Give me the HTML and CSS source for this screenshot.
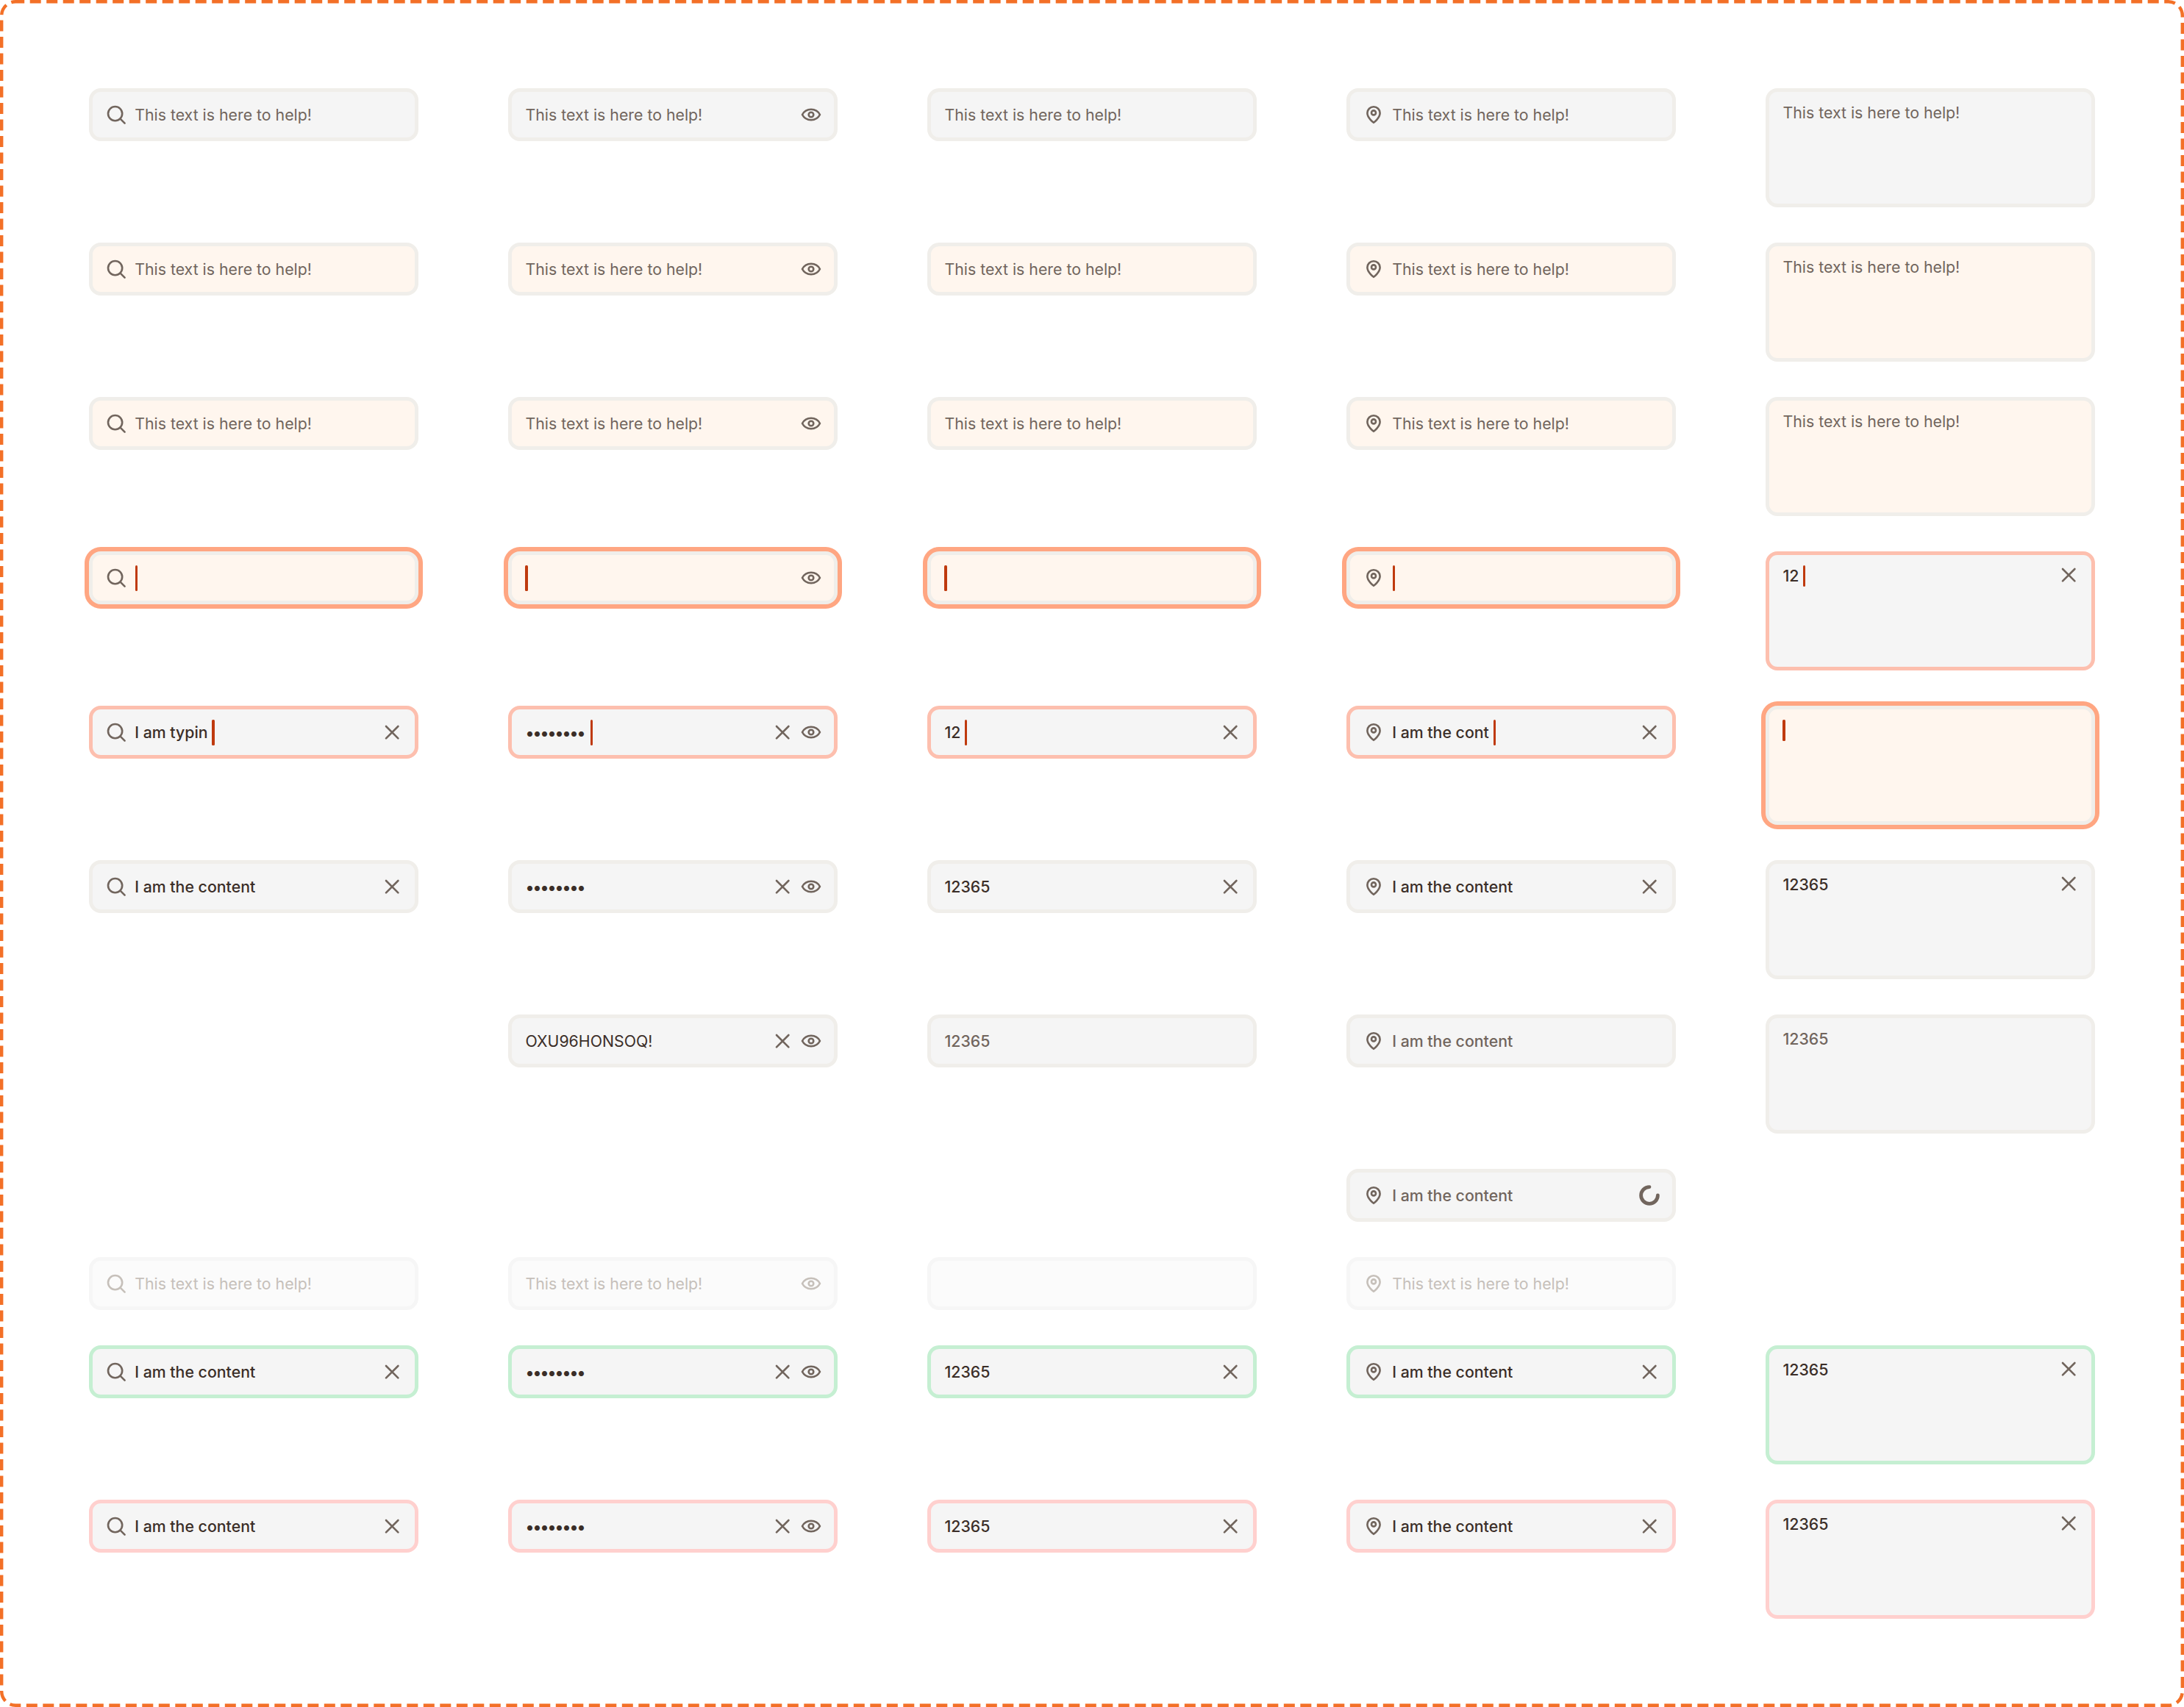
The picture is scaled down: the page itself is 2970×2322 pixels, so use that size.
FILE: index.html
```html
<!DOCTYPE html>
<html lang="en">
<head>
<meta charset="utf-8">
<title>Input states</title>
<link rel="stylesheet" href="styles.css">
</head>
<body>
<svg class="sprite" aria-hidden="true">
  <symbol id="i-search" viewBox="0 0 30 30"><circle cx="13.6" cy="13.6" r="9.6"/><path d="M20.6 20.6l6 6"/></symbol>
  <symbol id="i-eye" viewBox="0 0 30 30"><path d="M3 15c2.4-4.6 6.8-7.2 12-7.2S24.600 10.400 27 15c-2.400 4.600-6.800 7.200-12 7.200S5.400 19.600 3 15z"/><circle cx="15" cy="15" r="3.300"/></symbol>
  <symbol id="i-pin" viewBox="0 0 30 30"><path d="M15 25.800C15 25.800 23.600 19.500 23.600 12.800A8.600 8.600 0 1 0 6.400 12.800C6.400 19.500 15 25.800 15 25.800Z"/><circle cx="15" cy="12.400" r="3"/></symbol>
  <symbol id="i-x" viewBox="0 0 30 30"><path d="M7 7l16.400 16.400M23.400 7L7 23.400"/></symbol>
  <symbol id="i-spin" viewBox="0 0 30 30"><path class="spin-arc" d="M15 3.600A11.400 11.400 0 1 0 26.400 15"/></symbol>
</svg>
<main class="canvas">
  <svg class="frame" aria-hidden="true"><rect x="2.200" y="2.200" width="2965.600" height="2317.600" rx="19" ry="19"/></svg>
  <div class="board">
    <!-- row 1 default -->
    <div class="field"><svg class="ic"><use href="#i-search"/></svg><span class="txt">This text is here to help!</span></div>
    <div class="field"><span class="txt">This text is here to help!</span><svg class="ic end"><use href="#i-eye"/></svg></div>
    <div class="field"><span class="txt">This text is here to help!</span></div>
    <div class="field"><svg class="ic"><use href="#i-pin"/></svg><span class="txt">This text is here to help!</span></div>
    <div class="field area"><span class="txt">This text is here to help!</span></div>
    <!-- row 2 hover -->
    <div class="field warm"><svg class="ic"><use href="#i-search"/></svg><span class="txt">This text is here to help!</span></div>
    <div class="field warm"><span class="txt">This text is here to help!</span><svg class="ic end"><use href="#i-eye"/></svg></div>
    <div class="field warm"><span class="txt">This text is here to help!</span></div>
    <div class="field warm"><svg class="ic"><use href="#i-pin"/></svg><span class="txt">This text is here to help!</span></div>
    <div class="field area warm"><span class="txt">This text is here to help!</span></div>
    <!-- row 3 pressed -->
    <div class="field warm"><svg class="ic"><use href="#i-search"/></svg><span class="txt">This text is here to help!</span></div>
    <div class="field warm"><span class="txt">This text is here to help!</span><svg class="ic end"><use href="#i-eye"/></svg></div>
    <div class="field warm"><span class="txt">This text is here to help!</span></div>
    <div class="field warm"><svg class="ic"><use href="#i-pin"/></svg><span class="txt">This text is here to help!</span></div>
    <div class="field area warm"><span class="txt">This text is here to help!</span></div>
    <!-- row 4 focus -->
    <div class="field warm focus"><svg class="ic"><use href="#i-search"/></svg><span class="caret first"></span></div>
    <div class="field warm focus"><span class="caret first"></span><svg class="ic end"><use href="#i-eye"/></svg></div>
    <div class="field warm focus"><span class="caret first"></span></div>
    <div class="field warm focus"><svg class="ic"><use href="#i-pin"/></svg><span class="caret first"></span></div>
    <div class="field area typing"><span class="txt val">12</span><span class="caret short"></span><svg class="ic end"><use href="#i-x"/></svg></div>
    <!-- row 5 typing -->
    <div class="field typing"><svg class="ic"><use href="#i-search"/></svg><span class="txt val">I am typin</span><span class="caret"></span><svg class="ic end"><use href="#i-x"/></svg></div>
    <div class="field typing"><span class="txt val dots">••••••••</span><span class="caret"></span><svg class="ic end"><use href="#i-x"/></svg><svg class="ic"><use href="#i-eye"/></svg></div>
    <div class="field typing"><span class="txt val">12</span><span class="caret"></span><svg class="ic end"><use href="#i-x"/></svg></div>
    <div class="field typing"><svg class="ic"><use href="#i-pin"/></svg><span class="txt val">I am the cont</span><span class="caret"></span><svg class="ic end"><use href="#i-x"/></svg></div>
    <div class="field area warm focus"><span class="caret short first"></span></div>
    <!-- row 6 filled -->
    <div class="field"><svg class="ic"><use href="#i-search"/></svg><span class="txt val">I am the content</span><svg class="ic end"><use href="#i-x"/></svg></div>
    <div class="field"><span class="txt val dots">••••••••</span><svg class="ic end"><use href="#i-x"/></svg><svg class="ic"><use href="#i-eye"/></svg></div>
    <div class="field"><span class="txt val">12365</span><svg class="ic end"><use href="#i-x"/></svg></div>
    <div class="field"><svg class="ic"><use href="#i-pin"/></svg><span class="txt val">I am the content</span><svg class="ic end"><use href="#i-x"/></svg></div>
    <div class="field area"><span class="txt val">12365</span><svg class="ic end"><use href="#i-x"/></svg></div>
    <!-- row 7 revealed / read only -->
    <div class="slot"></div>
    <div class="field"><span class="txt plain">OXU96HONSOQ!</span><svg class="ic end"><use href="#i-x"/></svg><svg class="ic"><use href="#i-eye"/></svg></div>
    <div class="field"><span class="txt ro">12365</span></div>
    <div class="field"><svg class="ic"><use href="#i-pin"/></svg><span class="txt ro">I am the content</span></div>
    <div class="field area"><span class="txt ro">12365</span></div>
    <!-- row 8 loading -->
    <div class="slot"></div>
    <div class="slot"></div>
    <div class="slot"></div>
    <div class="field"><svg class="ic"><use href="#i-pin"/></svg><span class="txt ro">I am the content</span><svg class="ic end"><use href="#i-spin"/></svg></div>
    <div class="slot"></div>
    <!-- row 9 disabled -->
    <div class="field off"><svg class="ic"><use href="#i-search"/></svg><span class="txt">This text is here to help!</span></div>
    <div class="field off"><span class="txt">This text is here to help!</span><svg class="ic end"><use href="#i-eye"/></svg></div>
    <div class="field off"></div>
    <div class="field off"><svg class="ic"><use href="#i-pin"/></svg><span class="txt">This text is here to help!</span></div>
    <div class="slot"></div>
    <!-- row 10 success -->
    <div class="field good"><svg class="ic"><use href="#i-search"/></svg><span class="txt val">I am the content</span><svg class="ic end"><use href="#i-x"/></svg></div>
    <div class="field good"><span class="txt val dots">••••••••</span><svg class="ic end"><use href="#i-x"/></svg><svg class="ic"><use href="#i-eye"/></svg></div>
    <div class="field good"><span class="txt val">12365</span><svg class="ic end"><use href="#i-x"/></svg></div>
    <div class="field good"><svg class="ic"><use href="#i-pin"/></svg><span class="txt val">I am the content</span><svg class="ic end"><use href="#i-x"/></svg></div>
    <div class="field area good"><span class="txt val">12365</span><svg class="ic end"><use href="#i-x"/></svg></div>
    <!-- row 11 error -->
    <div class="field bad"><svg class="ic"><use href="#i-search"/></svg><span class="txt val">I am the content</span><svg class="ic end"><use href="#i-x"/></svg></div>
    <div class="field bad"><span class="txt val dots">••••••••</span><svg class="ic end"><use href="#i-x"/></svg><svg class="ic"><use href="#i-eye"/></svg></div>
    <div class="field bad"><span class="txt val">12365</span><svg class="ic end"><use href="#i-x"/></svg></div>
    <div class="field bad"><svg class="ic"><use href="#i-pin"/></svg><span class="txt val">I am the content</span><svg class="ic end"><use href="#i-x"/></svg></div>
    <div class="field area bad"><span class="txt val">12365</span><svg class="ic end"><use href="#i-x"/></svg></div>
  </div>
</main>
</body>
</html>
```
FILE: styles.css
```css
* { box-sizing: border-box; }
html, body { margin: 0; padding: 0; background: #fff; }
.sprite { display: none; }
.canvas {
  position: relative;
  width: 2970px;
  height: 2322px;
  padding: 120px 121px 0;
  font-family: "Inter", "Liberation Sans", sans-serif;
}
.frame { position: absolute; inset: 0; width: 100%; height: 100%; pointer-events: none; }
.frame rect { fill: none; stroke: #F37027; stroke-width: 4.4px; stroke-dasharray: 15 7.5; stroke-dashoffset: 3px; }
.board {
  display: grid;
  grid-template-columns: repeat(5, 448px);
  column-gap: 122px;
  grid-template-rows: repeat(7, 210px) 120px 120px 210px 210px;
  align-items: start;
}
.field {
  display: flex;
  align-items: center;
  gap: 7px;
  height: 72px;
  padding: 0 16.4px 0 16.7px;
  border: 5px solid #F0EEEA;
  border-radius: 16px;
  background: #F5F5F5;
  color: #71655D;
  font-size: 21.3px;
  line-height: 29px;
}
.area { height: 162px; align-items: flex-start; padding-top: 14px; padding-bottom: 14px; }
.area .ic { position: relative; top: -2px; }
.warm { background: #FFF6EE; }
.focus { box-shadow: 0 0 0 6px #FFA682; }
.typing { border-color: #FDBFAE; }
.good { border-color: #C5EFD2; }
.bad { border-color: #FFD0CE; }
.off { background: #FBFBFB; border-color: #F6F6F6; color: #C6C0BA; }
.txt { margin-left: 1.8px; white-space: nowrap; }
.ic + .txt { margin-left: 3.5px; }
.txt + .caret { margin-left: -1.2px; }
.val { color: #3B2E28; font-weight: 500; }
.plain { color: #3B2E28; }
.ro { font-weight: 500; }
.dots { font-size: 22.5px; letter-spacing: -2px; margin-right: 3px; }
.ic {
  flex: none;
  width: 30px;
  height: 30px;
  fill: none;
  stroke: currentColor;
  stroke-width: 2.6px;
  stroke-linecap: round;
  stroke-linejoin: round;
}
.end { margin-left: auto; }
.ic + .ic { margin-left: 2px; }
.spin-arc { stroke-width: 4.800px; }
.caret {
  flex: none;
  width: 3.2px;
  height: 35px;
  border-radius: 1.5px;
  background: #BF3A0E;
}
.caret.first { margin-left: 1.8px; }
.ic + .caret.first { margin-left: 4px; }
.caret.short { height: 29px; }
.slot { height: 72px; }
```
